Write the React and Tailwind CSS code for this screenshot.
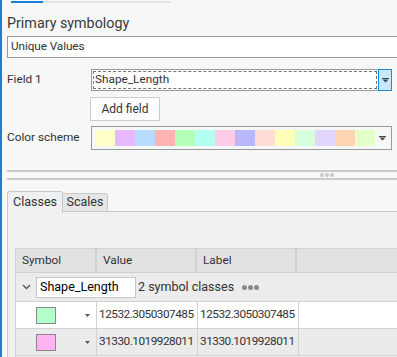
import React from "react";

const Arrow = ({ className = "" }) => (
  <svg width="7" height="5" viewBox="0 0 7 5" className={className}>
    <rect x="0" y="0" width="7" height="1" fill="#444" />
    <path d="M0.5 1.5 H6.5 L3.5 4.5 Z" fill="#444" />
  </svg>
);

const SmallArrow = () => (
  <svg width="5" height="3" viewBox="0 0 5 3">
    <path d="M0 0 H5 L2.5 3 Z" fill="#555" />
  </svg>
);

const swatches = [
  "#ffffcc", "#e8b8ff", "#b8dcff", "#ffb3b3", "#b3ffb8", "#b3fff0", "#ffcce8",
  "#b8b8ff", "#ffdcd4", "#ffffb8", "#d8ffdc", "#e0d6ff", "#ffd4b3", "#e4ffc8",
];

export default function App() {
  const font = { fontFamily: 'Roboto, "Noto Sans", sans-serif' };
  return (
    <div
      className="w-[397px] h-[357px] overflow-hidden bg-[#f6f7f7] border-l-2 border-[#1a7fd4] text-[#323232] text-[11.8px] flex flex-col"
      style={font}
    >
      {/* top progress */}
      <div className="mt-[1px] ml-[9px] w-[160px] h-[2px] bg-[#e2e2e2] flex">
        <div className="w-[32px] h-[2px] bg-[#1a7fd4]" />
      </div>

      <div className="ml-[5px] mt-[10px] text-[14.3px] leading-[20px] text-[#3a3a3a]">Primary symbology</div>

      <div className="ml-[5px] mt-[3px] h-[22px] w-[400px] bg-white border border-[#9a9a9a] flex items-center pl-[3px] tracking-[-0.1px]">
        Unique Values
      </div>

      {/* Field 1 */}
      <div className="flex items-center mt-[11px] ml-[5px] h-[22px]">
        <div className="w-[84px]">Field 1</div>
        <div className="w-[301px] h-[22px] border border-[#9a9a9a] bg-white flex p-[1px]">
          <div className="flex-1 border border-dashed border-[#777] flex items-center pl-[1px] mr-[1px]">Shape_Length</div>
          <div className="w-[14px] -my-[2px] -mr-[2px] bg-[#cce6fb] border border-[#1a8ce0] flex items-center justify-center">
            <Arrow />
          </div>
        </div>
      </div>

      <div className="ml-[88px] mt-[6px] w-[70px] h-[24px] bg-white border border-[#cccccc] flex items-center justify-center text-[12px]">
        Add field
      </div>

      {/* Color scheme */}
      <div className="flex items-center mt-[5px] ml-[5px] h-[24px]">
        <div className="w-[84px]">Color scheme</div>
        <div className="w-[301px] h-[24px] border border-[#9a9a9a] flex items-center pl-[3px] pr-[4px]">
          <div className="flex h-[16px]">
            {swatches.map((c, i) => (
              <div key={i} className="w-[20px] h-[16px]" style={{ background: c }} />
            ))}
          </div>
          <div className="flex-1 flex justify-end pr-[1px]">
            <Arrow />
          </div>
        </div>
      </div>

      {/* splitter */}
      <div className="ml-[5px] mt-[20px] h-[2px] bg-[#cacaca]" />
      <div className="ml-[5px] h-[6px] relative">
        <div className="absolute left-[313px] top-[1px] flex gap-[1px]">
          <div className="w-[4px] h-[4px] rounded-full bg-[#c8c8c8]" />
          <div className="w-[4px] h-[4px] rounded-full bg-[#c8c8c8]" />
          <div className="w-[4px] h-[4px] rounded-full bg-[#c8c8c8]" />
        </div>
      </div>
      <div className="ml-[5px] h-[2px] bg-[#cacaca]" />

      {/* tabs */}
      <div className="ml-[5px] mt-[10px] flex items-end h-[22px]">
        <div className="w-[56px] h-[22px] border border-b-0 border-[#c8c8c8] rounded-t-[3px] bg-[#eff0f1] flex items-center justify-center text-[12.5px] relative z-10 -mb-[1px] pb-[1px]">
          Classes
        </div>
        <div className="w-[45px] h-[19px] border border-l-0 border-[#c8c8c8] rounded-tr-[3px] bg-[#e6e6e6] flex items-center justify-center text-[12.5px]">
          Scales
        </div>
        <div className="flex-1 border-b border-[#c8c8c8]" />
      </div>

      {/* panel */}
      <div className="ml-[5px] flex-1 bg-[#eff0f1] border-l border-[#c8c8c8] pl-[7px] pt-[36px]">
        <div className="border-l border-t border-[#d2d2d2] w-[400px]">
          {/* header */}
          <div className="flex h-[24px] bg-[#e2e2e2] border-b border-[#d0d0d0]">
            <div className="w-[81px] border-r-2 border-[#d2d2d2] flex items-center pl-[6px]">Symbol</div>
            <div className="w-[100px] border-r-2 border-[#d2d2d2] flex items-center pl-[6px]">Value</div>
            <div className="w-[100px] border-r-2 border-[#d2d2d2] flex items-center pl-[6px]">Label</div>
            <div className="flex-1" />
          </div>
          {/* group row */}
          <div className="flex h-[28px] items-center bg-[#ececec]">
            <div className="w-[20px] flex justify-center">
              <svg width="9" height="6" viewBox="0 0 9 6">
                <path d="M1 1 L4.5 4.5 L8 1" stroke="#555" strokeWidth="1.4" fill="none" />
              </svg>
            </div>
            <div className="w-[100px] h-[21px] bg-white border border-[#c8c8c8] flex items-center pl-[3px] text-[12.5px] text-black">
              Shape_Length
            </div>
            <div className="ml-[2px] text-[12.5px]">2 symbol classes</div>
            <div className="ml-[8px] flex gap-[1px]">
              <div className="w-[5px] h-[5px] rounded-full bg-[#8a8a8a]" />
              <div className="w-[5px] h-[5px] rounded-full bg-[#8a8a8a]" />
              <div className="w-[5px] h-[5px] rounded-full bg-[#8a8a8a]" />
            </div>
          </div>
          {/* rows */}
          {[
            { c: "#b3ffcc", v: "12532.3050307485", bg: "bg-white" },
            { c: "#ffb3f0", v: "31330.1019928011", bg: "bg-[#ebebeb]" },
          ].map((r, i) => (
            <div key={i} className={`flex h-[27px] border-t border-[#d2d2d2] ${r.bg}`}>
              <div className="w-[81px] border-r border-[#d2d2d2] flex items-center">
                <div className="ml-[20px] w-[20px] h-[17px] border border-[#888]" style={{ background: r.c }} />
                <div className="ml-[29px]"><SmallArrow /></div>
              </div>
              <div className="w-[101px] border-r border-[#d2d2d2] flex items-center pl-[2px] tracking-[-0.5px]">{r.v}</div>
              <div className="w-[101px] border-r border-[#d2d2d2] flex items-center pl-[2px] tracking-[-0.5px]">{r.v}</div>
              <div className="flex-1" />
            </div>
          ))}
          <div className="h-[2px] border-t border-[#d2d2d2]" />
        </div>
      </div>
    </div>
  );
}
